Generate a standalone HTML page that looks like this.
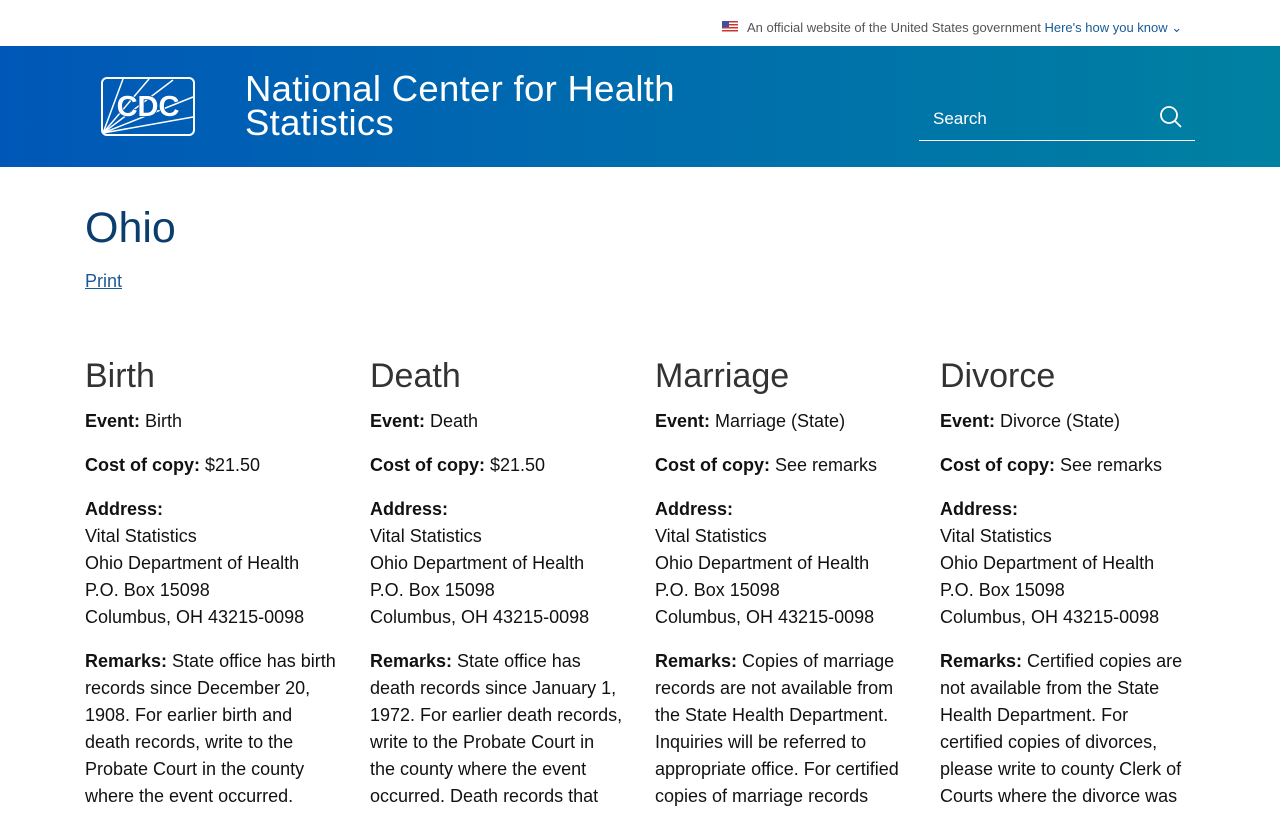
<!DOCTYPE html>
<html><head><meta charset="utf-8"><style>
*{margin:0;padding:0;box-sizing:border-box}
body{width:1280px;height:800px;overflow:hidden;font-family:"Liberation Sans",sans-serif;color:#000;background:#fff}
.top{height:46px;position:relative;font-size:13px;color:#555}
.top .t{position:absolute;left:747px;top:20px;white-space:nowrap}
.top .t span{color:#1a5a96}
.flag{position:absolute;left:722px;top:21px;width:16px;height:11px;background:repeating-linear-gradient(#c33 0 1.5px,#fff 1.5px 3px)}
.flag:before{content:"";position:absolute;left:0;top:0;width:7px;height:6px;background:#3c4fa0}
.hdr{height:121px;background:linear-gradient(90deg,#0057b7 0%,#0068b0 40%,#0081a1 100%);position:relative;color:#fff}
.logo{position:absolute;left:101px;top:31px}
.title{position:absolute;left:245px;top:26px;font-size:36.5px;line-height:34px;letter-spacing:0.3px}
.search{position:absolute;left:919px;top:48px;width:276px;height:47px;border-bottom:1.5px solid #fff}
.search span{position:absolute;left:14px;top:15px;font-size:17px}
.search svg{position:absolute;right:12px;top:11px}
h1{position:absolute;left:85px;top:204px;font-size:43px;font-weight:normal;color:#0b3e6e}
.print{position:absolute;left:85px;top:271px;font-size:18px;color:#1a5a96;text-decoration:underline}
.col{position:absolute;top:356px;width:270px;font-size:18px;line-height:27px;color:#111;white-space:nowrap}
.col h2{font-size:34px;font-weight:normal;color:#333;line-height:40px;margin-bottom:12px}
.col p{margin-bottom:17px}
</style></head><body>
<div class="top"><div class="flag"></div><div class="t">An official website of the United States government <span>Here's how you know ⌄</span></div></div>
<div class="hdr">
<svg class="logo" width="94" height="60" viewBox="0 0 94 60"><rect x="1" y="1" width="92" height="57" rx="5" fill="none" stroke="#fff" stroke-width="2"/><g stroke="#fff" stroke-width="1.5"><line x1="2" y1="56" x2="22" y2="2"/><line x1="2" y1="56" x2="48" y2="2"/><line x1="2" y1="56" x2="72" y2="3"/><line x1="2" y1="56" x2="92" y2="20"/><line x1="2" y1="56" x2="92" y2="40"/></g><text x="47" y="39" text-anchor="middle" font-family="Liberation Sans" font-weight="bold" font-size="29" fill="#fff" stroke="#0057b7" stroke-width="1.5" paint-order="stroke">CDC</text></svg>
<div class="title">National Center for Health<br>Statistics</div>
<div class="search"><span>Search</span><svg width="24" height="24" viewBox="0 0 24 24" fill="none" stroke="#fff" stroke-width="1.8"><circle cx="10" cy="10" r="8"/><line x1="16" y1="16" x2="22" y2="22"/></svg></div>
</div>
<h1>Ohio</h1>
<a class="print">Print</a>
<div class="col" style="left:85px"><h2>Birth</h2><p><b>Event:</b> Birth</p><p><b>Cost of copy:</b> $21.50</p><p><b>Address:</b><br>Vital Statistics<br>Ohio Department of Health<br>P.O. Box 15098<br>Columbus, OH 43215-0098</p><p><b>Remarks:</b> State office has birth<br>records since December 20,<br>1908. For earlier birth and<br>death records, write to the<br>Probate Court in the county<br>where the event occurred.</p></div>
<div class="col" style="left:370px"><h2>Death</h2><p><b>Event:</b> Death</p><p><b>Cost of copy:</b> $21.50</p><p><b>Address:</b><br>Vital Statistics<br>Ohio Department of Health<br>P.O. Box 15098<br>Columbus, OH 43215-0098</p><p><b>Remarks:</b> State office has<br>death records since January 1,<br>1972. For earlier death records,<br>write to the Probate Court in<br>the county where the event<br>occurred. Death records that</p></div>
<div class="col" style="left:655px"><h2>Marriage</h2><p><b>Event:</b> Marriage (State)</p><p><b>Cost of copy:</b> See remarks</p><p><b>Address:</b><br>Vital Statistics<br>Ohio Department of Health<br>P.O. Box 15098<br>Columbus, OH 43215-0098</p><p><b>Remarks:</b> Copies of marriage<br>records are not available from<br>the State Health Department.<br>Inquiries will be referred to<br>appropriate office. For certified<br>copies of marriage records</p></div>
<div class="col" style="left:940px"><h2>Divorce</h2><p><b>Event:</b> Divorce (State)</p><p><b>Cost of copy:</b> See remarks</p><p><b>Address:</b><br>Vital Statistics<br>Ohio Department of Health<br>P.O. Box 15098<br>Columbus, OH 43215-0098</p><p><b>Remarks:</b> Certified copies are<br>not available from the State<br>Health Department. For<br>certified copies of divorces,<br>please write to county Clerk of<br>Courts where the divorce was</p></div>
</body></html>
